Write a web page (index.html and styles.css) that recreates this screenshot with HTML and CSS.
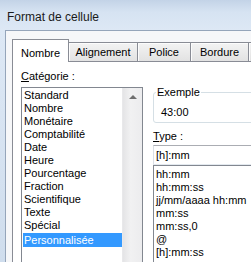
FILE: index.html
```html
<!DOCTYPE html>
<html lang="fr">
<head>
<meta charset="utf-8">
<title>Format de cellule</title>
<link rel="stylesheet" href="styles.css">
</head>
<body>
<div class="win">
  <div class="title">Format de cellule</div>
  <div class="client">
    <div class="tabs">
      <div class="tab active">Nombre</div>
      <div class="tab w-align">Alignement</div>
      <div class="tab w-police">Police</div>
      <div class="tab w-bord">Bordure</div>
      <div class="tab w-rempl"></div>
    </div>
    <div class="panel">
      <div class="col-left">
        <div class="label"><u>C</u>atégorie :</div>
        <div class="listbox">
          <ul class="items">
            <li>Standard</li>
            <li>Nombre</li>
            <li>Monétaire</li>
            <li>Comptabilité</li>
            <li>Date</li>
            <li>Heure</li>
            <li>Pourcentage</li>
            <li>Fraction</li>
            <li>Scientifique</li>
            <li>Texte</li>
            <li>Spécial</li>
            <li class="sel">Personnalisée</li>
          </ul>
          <div class="scrollbar"><div class="up"></div></div>
        </div>
      </div>
      <div class="col-right">
        <fieldset class="sample">
          <legend>Exemple</legend>
          <div class="sample-val">43:00</div>
        </fieldset>
        <div class="label type-label"><u>T</u>ype :</div>
        <div class="input">[h]:mm</div>
        <ul class="typelist">
          <li>hh:mm</li>
          <li>hh:mm:ss</li>
          <li>jj/mm/aaaa hh:mm</li>
          <li>mm:ss</li>
          <li>mm:ss,0</li>
          <li>@</li>
          <li>[h]:mm:ss</li>
        </ul>
      </div>
    </div>
  </div>
</div>
</body>
</html>
```
FILE: styles.css
```css
* { box-sizing: border-box; }
html, body { margin: 0; padding: 0; }
body {
  width: 251px;
  height: 262px;
  overflow: hidden;
  font-family: "Liberation Sans", Arial, sans-serif;
  font-size: 11px;
  color: #000;
  background: linear-gradient(to bottom, #c3d3e7 0px, #d6e3f2 12px, #dde8f5 30px, #cfdded 262px);
}
.win { width: 251px; height: 262px; display: flex; flex-direction: column; }
.title {
  height: 30px;
  padding: 10px 0 0 7px;
  font-size: 12px;
  line-height: 14px;
  color: #1a1a1a;
}
.client {
  flex: 1;
  margin-left: 5px;
  border-left: 1px solid #95a5ba;
  border-top: 1px solid #95a5ba;
  background: #f6f7f9;
  padding: 8px 0 0 6px;
  display: flex;
  flex-direction: column;
  overflow: hidden;
}
.tabs {
  display: flex;
  align-items: flex-end;
  height: 22px;
  flex: none;
}
.tab {
  flex: none;
  height: 19px;
  border: 1px solid #898c95;
  border-bottom: 0;
  margin-left: -1px;
  background: linear-gradient(to bottom, #f3f3f3, #e2e2e2);
  box-shadow: inset 1px 1px 0 #fcfcfc;
  text-align: center;
  line-height: 19px;
  white-space: nowrap;
  overflow: hidden;
}
.tab.active {
  margin-left: 0;
  width: 57px;
  height: 23px;
  margin-bottom: -1px;
  background: #fff;
  box-shadow: none;
  position: relative;
  z-index: 1;
  line-height: 26px;
}
.w-align { width: 70px; }
.w-police { width: 54px; }
.w-bord { width: 59px; }
.w-rempl { width: 80px; }
.panel {
  flex: 1;
  background: #fff;
  border: 1px solid #898c95;
  border-right: 0;
  border-bottom: 0;
  padding: 8px 0 0 8px;
  display: flex;
  gap: 10px;
}
.label { line-height: 13px; height: 13px; white-space: nowrap; }
.col-left { width: 122px; flex: none; }
.col-left .label { margin-bottom: 4px; }
.listbox {
  border: 1px solid #828790;
  border-bottom: 0;
  height: 200px;
  display: flex;
}
.items {
  list-style: none;
  margin: 0;
  padding: 1px 0 0 1px;
  flex: 1;
}
.items li {
  height: 13px;
  line-height: 13px;
  padding-left: 1px;
  white-space: nowrap;
}
.items li.sel { background: #3399ff; color: #fff; margin-top: 1px; height: 14px; line-height: 14px; }
.scrollbar {
  width: 20px;
  flex: none;
  background: linear-gradient(to right, #e4e4e6, #f1f1f2 40%, #ececee);
  border-left: 1px solid #e8e8ea;
}
.up {
  width: 0; height: 0;
  margin: 7px auto 0;
  border-left: 4px solid transparent;
  border-right: 4px solid transparent;
  border-bottom: 4px solid #6f6f6f;
}
.col-right { width: 120px; flex: none; padding-top: 16px; }
.sample {
  margin: 0;
  padding: 0 0 3px 2px;
  border: 1px solid #d5dfe5;
  border-radius: 3px;
  height: 37px;
}
.sample legend { padding: 0 1px; line-height: 13px; }
.sample-val { margin: 7px 0 0 5px; line-height: 13px; }
.type-label { margin-top: 7px; }
.input {
  margin-top: 2px;
  height: 20px;
  border: 1px solid #dbdfe6;
  border-top-color: #abadb3;
  border-bottom-color: #e3e9ef;
  padding: 3px 0 0 2px;
  line-height: 13px;
  white-space: nowrap;
}
.typelist {
  list-style: none;
  margin: 0;
  padding: 2px 0 0 2px;
  border: 1px solid #828790;
  border-bottom: 0;
  height: 120px;
}
.typelist li { height: 13px; line-height: 13px; white-space: nowrap; }
```
